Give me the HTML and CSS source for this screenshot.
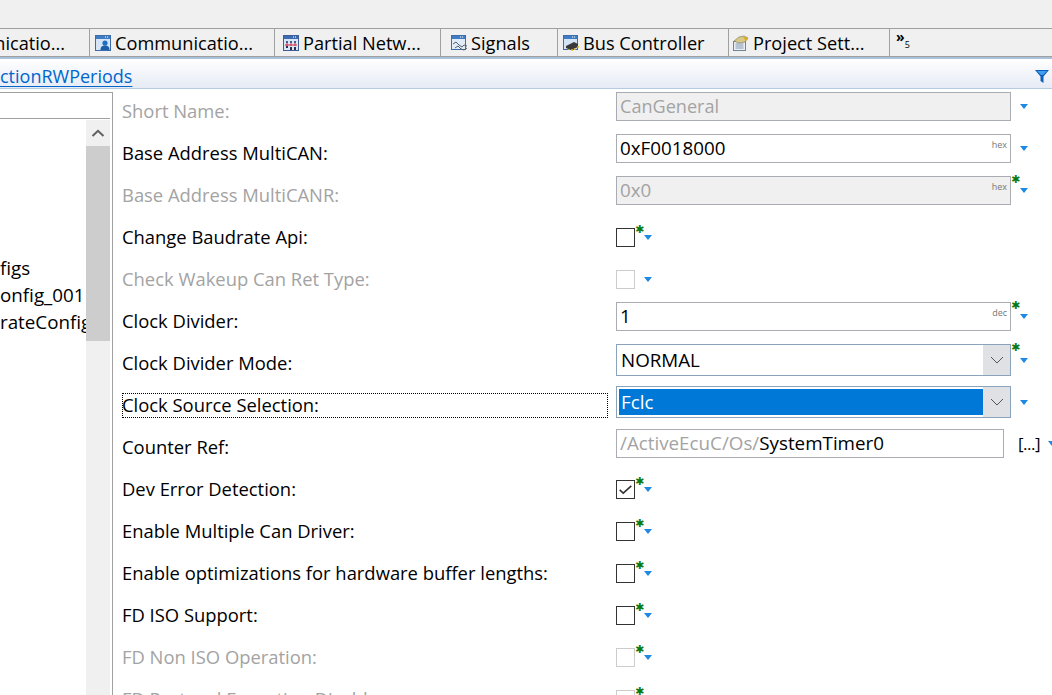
FILE: index.html
```html
<!DOCTYPE html>
<html lang="en">
<head>
    <meta charset="UTF-8">
    <title>CanGeneral</title>
    <link rel="stylesheet" href="styles.css">
</head>
<body>
    <div class="top-strip"></div>

    <div class="tabs">
        <div class="tab tab-first"><span class="tab-icon"></span>Communicatio...</div>
        <div class="tab tab-comm">
            <svg class="tab-icon" viewBox="0 0 16 16"><rect x=".5" y=".5" width="15" height="15" fill="#d5e5f6" stroke="#3d6ca8"/><rect x="1" y="1" width="14" height="3" fill="#3f7cc4"/><path d="M10 2h1M12 2h1" stroke="#fff"/><circle cx="10" cy="8" r="2.6" fill="#1f6fc0"/><path d="M5.5 15c0-3.5 2-4.5 4.500-4.500s4.500 1 4.500 4.500z" fill="#1a5fa8"/></svg>
            Communicatio...
        </div>
        <div class="tab tab-partial">
            <svg class="tab-icon" viewBox="0 0 16 16"><rect x=".5" y=".5" width="15" height="15" fill="#dbe6f3" stroke="#3d5f96"/><rect x="1" y="1" width="14" height="3" fill="#3f6cb0"/><path d="M10 2h1M12 2h1" stroke="#fff"/><path d="M3 6h2v2H3zM7 6h2v2H7zM11 6h2v2h-2z" fill="#3d5f96"/><path d="M2 10h12" stroke="#d02c3c"/><path d="M4 8v3M8 8v3M12 8v3" stroke="#d02c3c"/><path d="M3 11h2v2H3zM7 12h2v3H7zM11 12h2v3h-2z" fill="#2c2c55"/></svg>
            Partial Netw...
        </div>
        <div class="tab tab-signals">
            <svg class="tab-icon" viewBox="0 0 16 16"><rect x=".5" y=".5" width="14" height="14" fill="#e2ecf7" stroke="#3d6ca8"/><rect x="1" y="1" width="13" height="3" fill="#3f7cc4"/><path d="M9 2h1M11 2h1" stroke="#fff"/><path d="M2 9l3-2 3 3 3 2 2-2 3 1M4 13l3-2 3 3 3 1 3-2" fill="none" stroke="#55606c"/></svg>
            Signals
        </div>
        <div class="tab tab-bus">
            <svg class="tab-icon" viewBox="0 0 16 16"><rect x=".5" y=".5" width="14" height="14" fill="#d5e5f6" stroke="#3d6ca8"/><rect x="1" y="1" width="13" height="3" fill="#3f7cc4"/><path d="M9 2h1M11 2h1" stroke="#fff"/><path d="M3 11l8-4 4 2v3l-7 3-5-2z" fill="#3a3a3a"/><path d="M6 14v1M9 14v2M12 13v2M15 11v2" stroke="#e8b818" stroke-width="1.400"/></svg>
            Bus Controller
        </div>
        <div class="tab tab-project">
            <svg class="tab-icon" viewBox="0 0 16 16"><rect x=".5" y="6.500" width="12" height="9" fill="#e9eef5" stroke="#6f8296"/><path d="M2.500 9h8M2.500 11h8M2.500 13h8" stroke="#8398ae"/><path d="M1 6l5-4 5-1 4 2-3 4-6 1z" fill="#d8c88a" stroke="#7c7345" stroke-width=".6"/><path d="M10 2l5 1-2 3z" fill="#e0a818"/></svg>
            Project Sett...
        </div>
        <div class="tab-more">&raquo;<span class="tab-more-count">5</span></div>
    </div>

    <div class="header">
        <a class="header-link" href="#">ctionRWPeriods</a>
        <svg class="filter-icon" viewBox="0 0 14 13"><path d="M0 0h14L8.500 6.500V13L5.500 11V6.500z" fill="#0c5fb8"/><path d="M2 1h10L8 5H6z" fill="#41a0ee"/></svg>
    </div>

    <div class="main">
        <div class="tree-pane">
            <div class="tree-search"></div>
            <div class="tree-body">
                <div class="tree-list">
                    <div class="tree-row">figs</div>
                    <div class="tree-row">onfig_001</div>
                    <div class="tree-row">rateConfig</div>
                </div>
                <div class="scrollbar">
                    <div class="scroll-btn">
                        <svg width="14" height="8" viewBox="0 0 14 8"><path d="M1.500 7L7 1.800 12.500 7" fill="none" stroke="#606060" stroke-width="2"/></svg>
                    </div>
                    <div class="scroll-thumb"></div>
                </div>
            </div>
        </div>

        <div class="form">
            <div class="row">
                <div class="label disabled">Short Name:</div>
                <div class="control">
                    <div class="field field-wide field-name disabled-field"><span>CanGeneral</span></div>
                    <span class="arrow"></span>
                </div>
            </div>
            <div class="row">
                <div class="label">Base Address MultiCAN:</div>
                <div class="control">
                    <div class="field field-wide"><span>0xF0018000</span><span class="unit">hex</span></div>
                    <span class="arrow"></span>
                </div>
            </div>
            <div class="row">
                <div class="label disabled">Base Address MultiCANR:</div>
                <div class="control">
                    <div class="field field-wide disabled-field"><span>0x0</span><span class="unit">hex</span><span class="star star-field"></span></div>
                    <span class="arrow"></span>
                </div>
            </div>
            <div class="row">
                <div class="label">Change Baudrate Api:</div>
                <div class="control control-check">
                    <div class="check"><span class="star star-check"></span></div>
                    <span class="arrow arrow-check"></span>
                </div>
            </div>
            <div class="row">
                <div class="label disabled">Check Wakeup Can Ret Type:</div>
                <div class="control control-check">
                    <div class="check check-off"></div>
                    <span class="arrow arrow-check"></span>
                </div>
            </div>
            <div class="row">
                <div class="label">Clock Divider:</div>
                <div class="control">
                    <div class="field field-wide"><span>1</span><span class="unit">dec</span><span class="star star-field"></span></div>
                    <span class="arrow"></span>
                </div>
            </div>
            <div class="row">
                <div class="label">Clock Divider Mode:</div>
                <div class="control">
                    <div class="combo">
                        <div class="combo-value">NORMAL</div>
                        <div class="combo-btn"><svg width="14" height="8" viewBox="0 0 14 8"><path d="M1 1l6 6 6-6" fill="none" stroke="#555"/></svg></div>
                        <span class="star star-field"></span>
                    </div>
                    <span class="arrow"></span>
                </div>
            </div>
            <div class="row">
                <div class="label label-focus">Clock Source Selection:</div>
                <div class="control">
                    <div class="combo">
                        <div class="combo-value combo-selected">Fclc</div>
                        <div class="combo-btn"><svg width="14" height="8" viewBox="0 0 14 8"><path d="M1 1l6 6 6-6" fill="none" stroke="#555"/></svg></div>
                    </div>
                    <span class="arrow"></span>
                </div>
            </div>
            <div class="row">
                <div class="label">Counter Ref:</div>
                <div class="control control-ref">
                    <div class="field field-ref"><span><span class="ref-path">/ActiveEcuC/Os/</span>SystemTimer0</span></div>
                    <span class="ref-btn">[...]</span>
                    <span class="arrow arrow-ref"></span>
                </div>
            </div>
            <div class="row">
                <div class="label">Dev Error Detection:</div>
                <div class="control control-check">
                    <div class="check">
                        <svg class="tick" viewBox="0 0 19 19"><path d="M3 10l4 3.500 9-8" fill="none" stroke="#333" stroke-width="1.800"/></svg>
                        <span class="star star-check"></span>
                    </div>
                    <span class="arrow arrow-check"></span>
                </div>
            </div>
            <div class="row">
                <div class="label">Enable Multiple Can Driver:</div>
                <div class="control control-check">
                    <div class="check"><span class="star star-check"></span></div>
                    <span class="arrow arrow-check"></span>
                </div>
            </div>
            <div class="row">
                <div class="label">Enable optimizations for hardware buffer lengths:</div>
                <div class="control control-check">
                    <div class="check"><span class="star star-check"></span></div>
                    <span class="arrow arrow-check"></span>
                </div>
            </div>
            <div class="row">
                <div class="label">FD ISO Support:</div>
                <div class="control control-check">
                    <div class="check"><span class="star star-check"></span></div>
                    <span class="arrow arrow-check"></span>
                </div>
            </div>
            <div class="row">
                <div class="label disabled">FD Non ISO Operation:</div>
                <div class="control control-check">
                    <div class="check check-off"><span class="star star-check"></span></div>
                    <span class="arrow arrow-check"></span>
                </div>
            </div>
            <div class="row">
                <div class="label disabled">FD Protocol Exception Disable:</div>
                <div class="control control-check">
                    <div class="check check-off"><span class="star star-check"></span></div>
                </div>
            </div>
        </div>
    </div>
</body>
</html>
```

FILE: styles.css
```css
/* Page */
html,
body {
    height: 100%;
}

body {
    margin: 0;
    font-family: "Open Sans", "Noto Sans", sans-serif;
    font-size: 18.4px;
    color: #000;
    background-color: #fff;
    overflow: hidden;
}

.top-strip {
    height: 28px;
    background-color: #f0f0f0;
}

/* Editor tabs */
.tabs {
    display: flex;
    height: 27px;
    background-color: #f0f0f0;
    border-top: 1px solid #a0a0a0;
    border-bottom: 1px solid #a0a0a0;
    font-size: 18.2px;
    overflow: hidden;
}

.tab {
    display: flex;
    align-items: center;
    gap: 4px;
    flex: none;
    box-sizing: border-box;
    padding-left: 5px;
    border-right: 1px solid #a0a0a0;
    white-space: nowrap;
}

.tab-icon {
    width: 16px;
    height: 16px;
    flex: none;
}

.tab-first {
    width: 188px;
    margin-left: -98px;
}

.tab-comm {
    width: 185px;
}

.tab-partial {
    width: 166px;
    padding-left: 8px;
}

.tab-signals {
    width: 117px;
    padding-left: 10px;
}

.tab-bus {
    width: 171px;
}

.tab-project {
    width: 161px;
    padding-left: 4px;
}

.tab-more {
    padding-left: 6px;
    font-size: 14px;
    font-weight: 700;
    line-height: 16px;
}

.tab-more-count {
    font-size: 9px;
    font-weight: 400;
    vertical-align: -6px;
}

/* Section header */
.header {
    display: flex;
    align-items: center;
    justify-content: space-between;
    box-sizing: border-box;
    height: 32px;
    padding: 5px 3px 0 0;
    border-top: 2px solid #a8c2dc;
    border-bottom: 1px solid #b5cbe0;
    background: linear-gradient(to bottom, #fff, #e6ebf5);
    font-size: 18px;
}

.header-link {
    color: #0066cc;
    text-decoration: underline;
    text-underline-offset: 3px;
}

.filter-icon {
    width: 14px;
    height: 13px;
}

.main {
    display: flex;
    height: 606px;
}

/* Left tree */
.tree-pane {
    flex: none;
    width: 112px;
    margin-top: 3px;
    border-top: 1px solid #a0a0a0;
    border-right: 1px solid #a0a0a0;
}

.tree-search {
    height: 25px;
    margin-right: 2px;
    border-bottom: 1px solid #a0a0a0;
}

.tree-body {
    display: flex;
    height: 577px;
    padding-top: 1px;
}

.tree-list {
    flex: none;
    width: 86px;
    padding-top: 135px;
    font-size: 18.8px;
    overflow: hidden;
}

.tree-row {
    height: 27px;
    line-height: 27px;
    white-space: nowrap;
}

.scrollbar {
    flex: none;
    width: 24px;
    background-color: #f0f0f0;
}

.scroll-btn {
    display: flex;
    align-items: center;
    justify-content: center;
    height: 26px;
}

.scroll-thumb {
    height: 195px;
    background-color: #cdcdcd;
}

/* Property form */
.form {
    flex: 1;
    padding: 3px 0 0 9px;
}

.row {
    display: flex;
    height: 42px;
}

.label {
    flex: none;
    box-sizing: border-box;
    width: 486px;
    height: 25px;
    margin: 7px 8px 0 0;
    line-height: 24px;
    white-space: nowrap;
}

.label-focus {
    outline: 1px dotted #000;
    outline-offset: -1px;
}

.disabled {
    color: #a3a3a3;
}

.control {
    display: flex;
    align-items: center;
    align-self: flex-start;
    font-size: 18.8px;
}

.control-check {
    margin-top: 10px;
}

.control-ref {
    margin-top: 1px;
}

.field {
    position: relative;
    display: flex;
    justify-content: space-between;
    box-sizing: border-box;
    height: 29px;
    padding: 0 3px;
    border: 1px solid #a9acb2;
    line-height: 26px;
    white-space: nowrap;
}

.field-wide {
    width: 395px;
}

.field-name {
    font-size: 18.1px;
}

.field-ref {
    width: 388px;
}

.disabled-field {
    background-color: #f0f0f0;
    color: #a3a3a3;
}

.unit {
    font-size: 9px;
    line-height: 20px;
    color: #777;
}

.ref-path {
    color: #a3a3a3;
}

.ref-btn {
    margin-left: 14px;
    font-size: 17px;
    letter-spacing: -0.5px;
}

.combo {
    position: relative;
    display: flex;
    box-sizing: border-box;
    width: 395px;
    height: 32px;
    border: 1px solid #8ba3ba;
}

.combo-value {
    flex: 1;
    padding-left: 4px;
    line-height: 31px;
}

.combo-selected {
    margin: 2px 0 2px 2px;
    padding-left: 2px;
    line-height: 27px;
    background-color: #0078d7;
    color: #fff;
}

.combo-btn {
    display: flex;
    align-items: center;
    justify-content: center;
    flex: none;
    width: 27px;
    background-color: #dfe1e4;
}

.arrow {
    flex: none;
    width: 0;
    height: 0;
    margin-left: 9px;
    border-top: 5px solid #1e88e5;
    border-left: 4px solid transparent;
    border-right: 4px solid transparent;
}

.arrow-ref {
    margin-left: 8px;
}

/* Checkboxes */
.check {
    position: relative;
    flex: none;
    box-sizing: border-box;
    width: 19px;
    height: 19px;
    border: 1px solid #333;
}

.check-off {
    border-color: #cccccc;
}

.tick {
    display: block;
    width: 17px;
    height: 17px;
}

/* Small green marker next to changed values */
.star {
    position: absolute;
    width: 7px;
    height: 7px;
}

.star::before {
    content: "\2731";
    display: block;
    font-family: "DejaVu Sans", sans-serif;
    font-size: 11px;
    line-height: 7px;
    text-align: center;
    color: #0a7a14;
}

.star-field {
    top: -1px;
    right: -8px;
}

.star-check {
    top: -3px;
    right: -8px;
}
```
